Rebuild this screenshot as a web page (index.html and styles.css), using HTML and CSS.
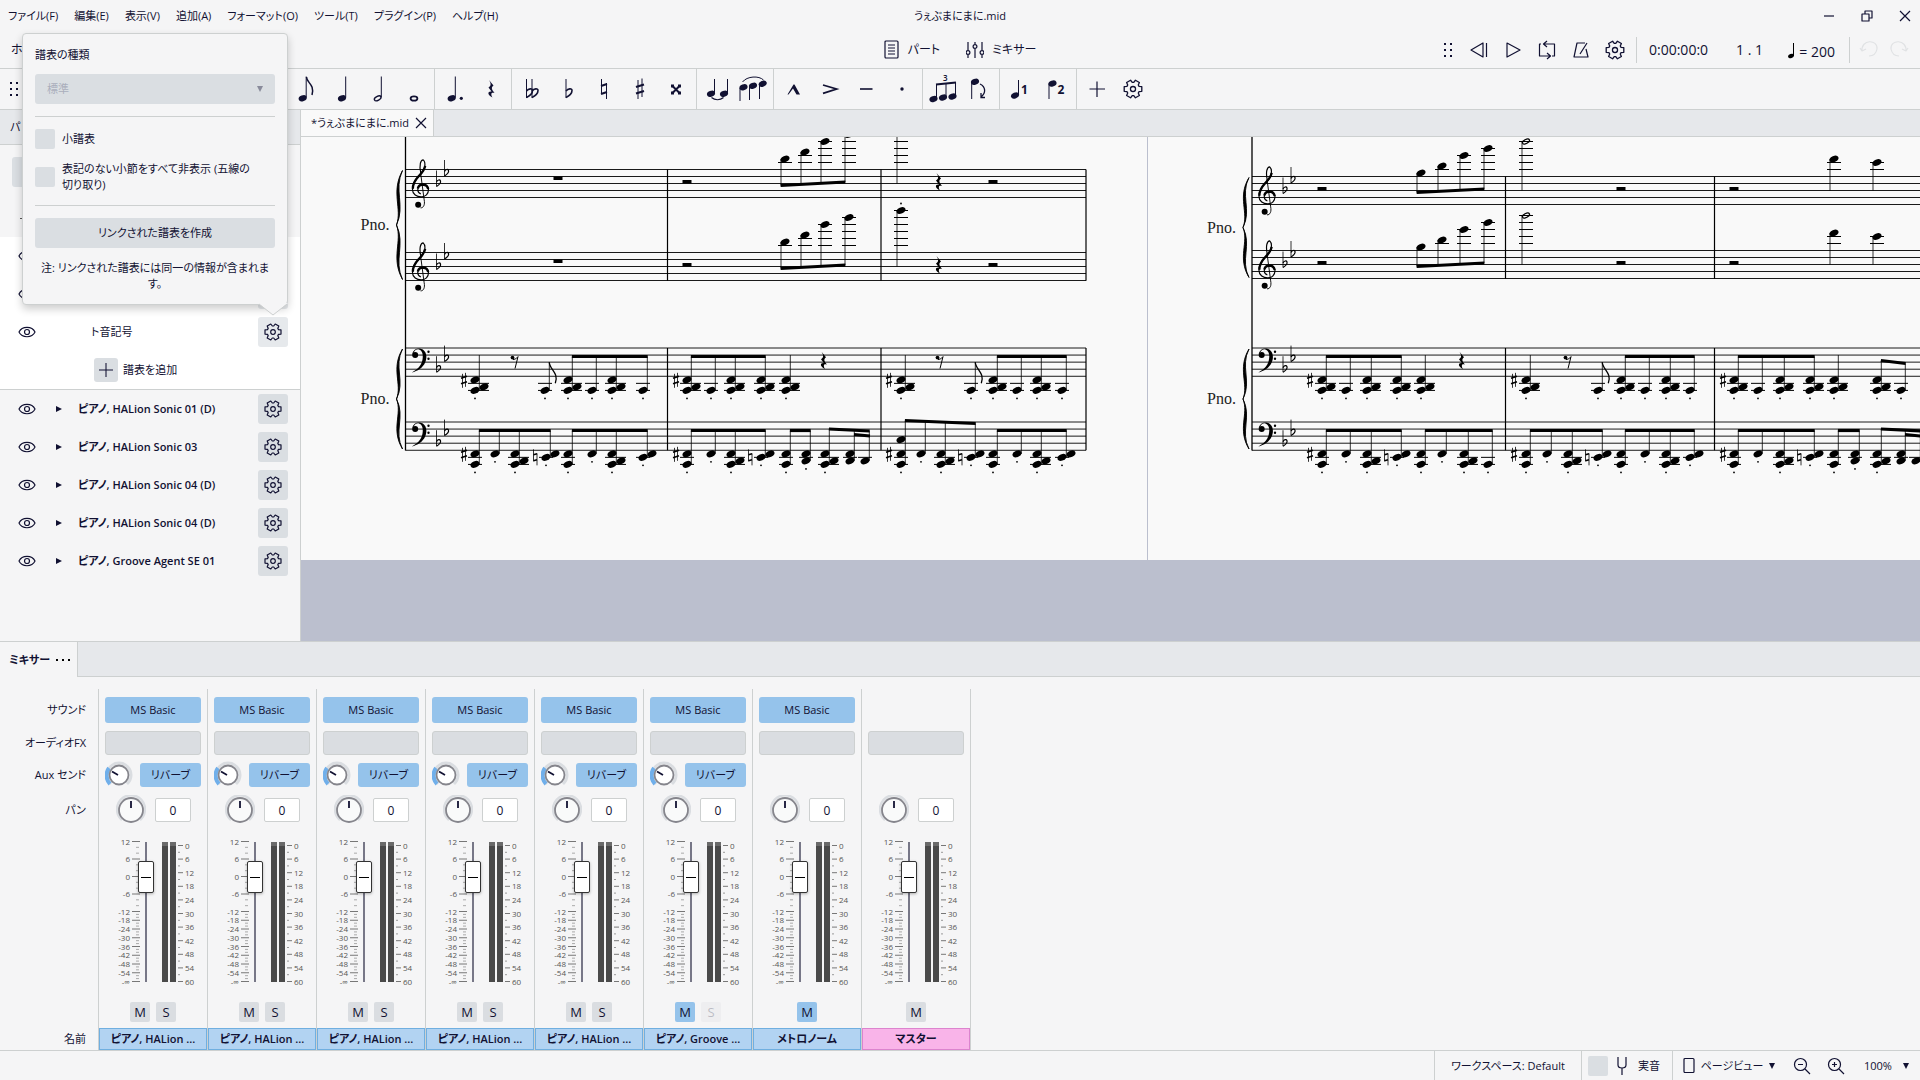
FILE: index.html
```html
<!DOCTYPE html>
<html lang="ja">
<head>
  <meta charset="UTF-8" />
  <title>うぇぶまにまに.mid</title>
  <meta name="viewport" content="width=device-width, initial-scale=1.0">
  <link rel="stylesheet" href="styles.css">
</head>
<body>

<svg class="defs" aria-hidden="true">
  <symbol id="i-gear" viewBox="-10 -10 20 20">
    <path d="M5.5-2.4 8-2.1V2.1L5.5 2.4 4.8 3.6 5.8 5.9 2.2 8 .7 6H-.7L-2.2 8-5.8 5.9-4.8 3.6-5.5 2.4-8 2.1V-2.1L-5.5-2.4-4.8-3.6-5.8-5.9-2.2-8-.7-6H.7L2.2-8 5.8-5.9 4.8-3.6Z"/>
    <circle r="2.3"/>
  </symbol>
  <symbol id="i-eye" viewBox="0 0 18 12">
    <path d="M1 6C4 -.3 14-.3 17 6 14 12.300 4 12.300 1 6Z"/>
    <circle cx="9" cy="6" r="2.500"/>
  </symbol>
  <symbol id="i-plus" viewBox="0 0 16 16"><path d="M8 0V16M0 8H16"/></symbol>
  <symbol id="i-grip" viewBox="0 0 10 14">
    <path class="solid" d="M0 0h2v2H0zM6 0h2v2H6zM0 6h2v2H0zM6 6h2v2H6zM0 12h2v2H0zM6 12h2v2H6z"/>
  </symbol>
  <symbol id="i-down" viewBox="0 0 6 6"><path class="solid" d="M0 0H6L3 6Z"/></symbol>
  <symbol id="i-right" viewBox="0 0 6 6"><path class="solid" d="M0 0 6 3 0 6Z"/></symbol>
  <symbol id="i-close" viewBox="0 0 12 12"><path d="M1 1 11 11M11 1 1 11"/></symbol>
</svg>

<header class="titlebar">
  <nav class="menu">
    <button>ファイル(F)</button>
    <button>編集(E)</button>
    <button>表示(V)</button>
    <button>追加(A)</button>
    <button>フォーマット(O)</button>
    <button>ツール(T)</button>
    <button>プラグイン(P)</button>
    <button>ヘルプ(H)</button>
  </nav>
  <h1>うぇぶまにまに.mid</h1>
  <div class="window-buttons">
    <button aria-label="最小化"><svg class="ico" width="12" height="12" viewBox="0 0 12 12"><path d="M1 6H11"/></svg></button>
    <button aria-label="元に戻す"><svg class="ico" width="12" height="12" viewBox="0 0 12 12"><path d="M1 4H8V11H1ZM4 4V1H11V8H8"/></svg></button>
    <button aria-label="閉じる"><svg class="ico" width="12" height="12"><use href="#i-close"/></svg></button>
  </div>
</header>

<div class="mainbar">
  <nav><button class="home" aria-label="ホーム">ホ</button></nav>
  <div class="mainbar-center">
    <button>
      <svg class="ico" width="16" height="20" viewBox="0 0 16 20"><rect x="1" y="1" width="13" height="17" rx="1"/><path d="M4 5H11M4 8H11M4 11H11M4 14H11"/></svg>
      パート
    </button>
    <button>
      <svg class="ico" width="18" height="18" viewBox="0 0 18 18"><path d="M2 1V9M2 14V17M9 1V3M9 8V17M16 1V9M16 14V17"/><circle cx="2" cy="11.500" r="1.900"/><circle cx="9" cy="5.500" r="1.900"/><circle cx="16" cy="11.500" r="1.900"/></svg>
      ミキサー
    </button>
  </div>
  <div class="playback">
    <svg class="ico grip" width="10" height="14"><use href="#i-grip"/></svg>
    <button class="tool" aria-label="先頭へ"><svg class="ico" width="20" height="18" viewBox="0 0 20 18"><path d="M14 2V16L2 9ZM17.500 2V16"/></svg></button>
    <button class="tool" aria-label="再生"><svg class="ico" width="18" height="18" viewBox="0 0 18 18"><path d="M3 2 16 9 3 16Z"/></svg></button>
    <button class="tool" aria-label="ループ"><svg class="ico" width="18" height="20" viewBox="0 0 18 20"><path d="M5 4H16.500V16H14M13 16H1.500V4H3M9 1 5.500 4 9 7M9 13 12.500 16 9 19"/></svg></button>
    <button class="tool" aria-label="メトロノーム"><svg class="ico" width="18" height="18" viewBox="0 0 18 18"><path d="M13 2H5L2 16H16L14 8M15 2 8 13"/></svg></button>
    <button class="tool" aria-label="再生設定"><svg class="ico" width="22" height="22"><use href="#i-gear"/></svg></button>
    <i class="sep"></i>
    <span class="time">0:00:00:0</span>
    <span class="beat">1 . 1</span>
    <span class="tempo"><svg width="8" height="18" viewBox="0 0 8 18"><ellipse cx="3" cy="15" rx="3" ry="2" transform="rotate(-20 3 15)"/><path d="M5 2h1v13H5z"/></svg> = 200</span>
    <i class="sep"></i>
    <button class="undo" aria-label="元に戻す" disabled><svg class="ico" width="20" height="18" viewBox="0 0 20 18"><path d="M3 11C2-1 19-1 18 9 17 14 14 16 10 16M1 8 3 11 7 9"/></svg></button>
    <button class="undo" aria-label="やり直す" disabled><svg class="ico" width="20" height="18" viewBox="0 0 20 18"><path d="M17 11C18-1 1-1 2 9 3 14 6 16 10 16M19 8 17 11 13 9"/></svg></button>
  </div>
</div>

<div class="notebar">
  <svg class="ico grip" width="10" height="14"><use href="#i-grip"/></svg>
  <div class="notes" id="notebar"></div>
</div>

<main>
  <aside class="instruments">
    <div class="panel-head">パ</div>
    <div class="panel-tools"><button class="btn" aria-label="追加"></button></div>
    <div class="row"><button class="eye closed" aria-label="非表示"></button></div>
    <div class="opened">
      <div class="row">
        <button class="eye" aria-label="表示"><svg class="ico" width="18" height="12"><use href="#i-eye"/></svg></button>
      </div>
      <div class="row">
        <button class="eye" aria-label="表示"><svg class="ico" width="18" height="12"><use href="#i-eye"/></svg></button>
        <button class="btn cog" aria-label="設定"></button>
      </div>
      <div class="row">
        <button class="eye" aria-label="表示"><svg class="ico" width="18" height="12"><use href="#i-eye"/></svg></button>
        <span class="staff-name">ト音記号</span>
        <button class="btn cog" aria-label="設定"><svg class="ico" width="20" height="20"><use href="#i-gear"/></svg></button>
      </div>
      <div class="row add">
        <button class="btn plus" id="add-staff"><svg class="ico" width="14" height="14"><use href="#i-plus"/></svg></button>
        <label for="add-staff">譜表を追加</label>
      </div>
    </div>
    <div id="rows"></div>

    <section class="popup">
      <label class="popup-title" for="staff-type">譜表の種類</label>
      <div class="select">
        <select id="staff-type" disabled><option>標準</option></select>
        <svg width="6" height="6"><use href="#i-down"/></svg>
      </div>
      <hr>
      <div class="check"><input type="checkbox" id="small"><label for="small">小譜表</label></div>
      <div class="check two"><input type="checkbox" id="cutaway"><label for="cutaway">表記のない小節をすべて非表示 (五線の<br>切り取り)</label></div>
      <hr>
      <button class="btn wide">リンクされた譜表を作成</button>
      <p>注: リンクされた譜表には同一の情報が含まれま<br>す。</p>
      <svg class="tip" width="30" height="13" viewBox="0 0 30 13"><path class="fill" d="M0 0H30L15 12Z"/><path class="edge" d="M1 1 15 12 29 1"/></svg>
    </section>
  </aside>

  <section class="score">
    <div class="tabs">
      <div class="tab">*うぇぶまにまに.mid
        <button aria-label="タブを閉じる"><svg class="ico" width="12" height="12"><use href="#i-close"/></svg></button>
      </div>
    </div>
    <div class="canvas">
      <svg class="page" id="page1" width="846" height="423" viewBox="301 137 846 423"></svg>
      <svg class="page" id="page2" width="846" height="423" viewBox="1148 137 846 423"></svg>
    </div>
  </section>
</main>

<section class="mixer">
  <div class="mixer-head">
    <div class="mixer-tab">ミキサー <button aria-label="メニュー"><svg width="16" height="4" viewBox="0 0 16 4"><path d="M1 1h2v2H1zM7 1h2v2H7zM13 1h2v2h-2z"/></svg></button></div>
  </div>
  <div class="mixer-body" id="mixer">
    <div class="labels">
      <span class="r-sound">サウンド</span>
      <span class="r-fx">オーディオFX</span>
      <span class="r-aux">Aux センド</span>
      <span class="r-pan">パン</span>
      <span class="r-name">名前</span>
    </div>
  </div>
</section>

<footer>
  <button class="workspace">ワークスペース: Default</button>
  <div class="pitch">
    <input type="checkbox" id="concert">
    <label for="concert"><svg class="ico" width="10" height="20" viewBox="0 0 10 20"><path d="M1 1V9C1 13 9 13 9 9V1M5 12V19"/></svg>実音</label>
  </div>
  <button class="view"><svg class="ico" width="12" height="18" viewBox="0 0 12 18"><rect x="1" y="1.500" width="10" height="14" rx="1"/></svg><span>ページビュー</span><svg width="6" height="6"><use href="#i-down"/></svg></button>
  <button class="zoom" aria-label="縮小"><svg class="ico" width="18" height="18" viewBox="0 0 18 18"><circle cx="7.500" cy="7.500" r="6"/><path d="M12 12 17 17M5 7.500H10"/></svg></button>
  <button class="zoom" aria-label="拡大"><svg class="ico" width="18" height="18" viewBox="0 0 18 18"><circle cx="7.500" cy="7.500" r="6"/><path d="M12 12 17 17M5 7.500H10M7.500 5V10"/></svg></button>
  <button class="percent">100% <svg width="6" height="6"><use href="#i-down"/></svg></button>
</footer>

<script src="script.js"></script>
</body>
</html>
```
FILE: styles.css
```css
* {
  box-sizing: border-box;
}

html, body {
  margin: 0;
  height: 100%;
}

body {
  display: flex;
  flex-direction: column;
  overflow: hidden;
  background: #f5f5f6;
  color: #111132;
  font-family: 'Open Sans', 'Noto Sans CJK JP', sans-serif;
  font-size: 11px;
  line-height: 16px;
  font-feature-settings: 'palt';
}

button, input, select {
  margin: 0;
  padding: 0;
  border: 0;
  background: none;
  color: inherit;
  font: inherit;
  font-feature-settings: inherit;
}

input[type=checkbox] {
  appearance: none;
  flex: none;
  width: 20px;
  height: 20px;
  border-radius: 2px;
  background: #dadee2;
}

.defs {
  position: absolute;
  width: 0;
  height: 0;
}

.ico {
  flex: none;
  fill: none;
  stroke: currentColor;
  stroke-width: 1.2;
  stroke-linejoin: round;
}

.solid {
  fill: #111132;
  stroke: none;
}

.btn {
  border-radius: 3px;
  background: #dadee2;
}

/* title bar */

.titlebar, .mainbar {
  display: grid;
  grid-template-columns: 1fr auto 1fr;
  align-items: center;
}

.titlebar {
  height: 32px;
}

.menu {
  display: flex;
  gap: 16px;
  padding-left: 8px;
}

.titlebar h1 {
  margin: 0;
  font-size: 11px;
  font-weight: 400;
}

.window-buttons {
  display: flex;
  justify-content: flex-end;
  gap: 8px;
}

.window-buttons button {
  display: flex;
  justify-content: center;
  width: 30px;
}

/* main toolbar */

.mainbar {
  height: 37px;
  border-bottom: 1px solid #cdd0d0;
  font-size: 12px;
}

.home {
  padding-left: 11px;
}

.mainbar-center {
  display: flex;
  gap: 26px;
}

.mainbar-center button {
  display: flex;
  align-items: center;
  gap: 8px;
}

.playback {
  display: flex;
  justify-content: flex-end;
  align-items: center;
  padding-right: 6px;
  font-size: 14px;
}

.playback .grip {
  margin-right: 8px;
}

.tool {
  display: flex;
  align-items: center;
  justify-content: center;
  width: 34px;
  height: 30px;
}

.sep {
  width: 1px;
  height: 26px;
  margin: 0 4px;
  background: #cdd0d0;
}

.time {
  width: 66px;
  padding-left: 8px;
}

.beat {
  width: 56px;
  text-align: right;
}

.tempo {
  width: 72px;
  margin-right: 10px;
  text-align: right;
  white-space: nowrap;
}

.tempo svg {
  vertical-align: -2px;
}

.undo {
  width: 30px;
  height: 20px;
  color: #e0e2e4;
}

.notebar {
  display: flex;
  align-items: center;
  height: 41px;
  border-bottom: 1px solid #cdd0d0;
}

.notebar .grip {
  margin-left: 10px;
}

.notes {
  display: flex;
  margin-left: 268px;
}

.notes button {
  width: 36px;
  height: 40px;
}

.notes button > svg {
  display: block;
  fill: #111132;
}

.notes .ln {
  fill: none;
  stroke: #111132;
}

.notes text {
  font-size: 12px;
  font-weight: 700;
}

.notes text.tiny {
  font-size: 8px;
  font-weight: 600;
}

.notes i {
  width: 1px;
  margin: 0 2px;
  background: #cdd0d0;
}

/* instruments */

main {
  display: flex;
  flex: 1;
  min-height: 0;
}

.instruments {
  position: relative;
  flex: none;
  width: 301px;
  border-right: 1px solid #cdd0d0;
}

.panel-head {
  height: 35px;
  padding: 9px 10px;
  border-bottom: 1px solid #cdd0d0;
  background: #e6e8eb;
}

.panel-tools {
  height: 54px;
  padding: 12px;
}

.panel-tools .btn {
  width: 60px;
  height: 30px;
}

.row {
  display: flex;
  align-items: center;
  height: 38px;
  padding: 0 12px 0 18px;
}

.opened {
  border-bottom: 1px solid #cdd0d0;
  background: #fff;
}

.eye {
  display: flex;
  width: 18px;
}

.eye.closed {
  width: 16px;
  height: 1px;
  margin-left: 2px;
  background: #555;
}

.arrow {
  display: flex;
  width: 28px;
  padding-left: 20px;
}

.name {
  margin-left: 14px;
  font-weight: 600;
}

.staff-name {
  margin-left: 55px;
}

.cog {
  display: flex;
  align-items: center;
  justify-content: center;
  width: 30px;
  height: 30px;
  margin-left: auto;
}

.opened .cog {
  background: #e6e9ec;
}

.row.add {
  gap: 5px;
  padding-left: 94px;
}

.plus {
  display: flex;
  align-items: center;
  justify-content: center;
  width: 24px;
  height: 24px;
}

.popup {
  position: absolute;
  left: 22px;
  top: -77px;
  z-index: 2;
  width: 266px;
  padding: 13px 12px 12px;
  border: 1px solid #cdd0d0;
  border-radius: 4px;
  background: #f5f5f6;
  box-shadow: 0 4px 8px rgba(0, 0, 0, 0.2);
}

.popup-title {
  display: block;
  margin-bottom: 11px;
}

.select {
  display: flex;
  align-items: center;
  height: 30px;
  padding: 0 12px;
  border-radius: 3px;
  background: #dadee2;
}

.select select {
  appearance: none;
  flex: 1;
  opacity: 1;
  color: #aaaebc;
}

.select svg {
  opacity: 0.4;
}

.popup hr {
  margin: 12px 0;
  border: 0;
  border-top: 1px solid #cdd0d0;
}

.check {
  display: flex;
  align-items: center;
  gap: 7px;
}

.check.two {
  margin-top: 12px;
}

.wide {
  display: block;
  width: 100%;
  height: 30px;
}

.popup p {
  margin: 12px 0 0;
  text-align: center;
  white-space: nowrap;
}

.tip {
  position: absolute;
  right: -1px;
  bottom: -12px;
}

.tip .fill {
  fill: #f5f5f6;
}

.tip .edge {
  fill: none;
  stroke: #cdd0d0;
}

/* score */

.score {
  display: flex;
  flex-direction: column;
  flex: 1;
  min-width: 0;
}

.tabs {
  display: flex;
  height: 27px;
  border-bottom: 1px solid #cdd0d0;
  background: #e6e8eb;
}

.tab {
  display: flex;
  align-items: center;
  gap: 6px;
  padding: 0 6px 0 10px;
  border-right: 1px solid #cdd0d0;
  background: #f9f9f9;
}

.tab button {
  display: flex;
}

.canvas {
  display: flex;
  flex: 1;
  align-items: flex-start;
  gap: 1px;
  overflow: hidden;
  background: #bbbfce;
}

.page {
  flex: none;
  background: #f9f9f9;
}

.page .line {
  fill: none;
  stroke: #000;
}

.page text {
  fill: #222;
  font-family: 'Liberation Serif', serif;
  font-size: 16px;
}

/* mixer */

.mixer-head {
  display: flex;
  height: 36px;
  border-top: 1px solid #cdd0d0;
  border-bottom: 1px solid #cdd0d0;
  background: #e6e8eb;
}

.mixer-tab {
  display: flex;
  align-items: center;
  gap: 5px;
  height: 35px;
  padding: 0 6px 0 9px;
  border-right: 1px solid #cdd0d0;
  background: #f5f5f6;
  font-weight: 600;
}

.mixer-tab button {
  display: flex;
}

.mixer-body {
  display: flex;
  padding-top: 12px;
  border-bottom: 1px solid #cdd0d0;
}

.labels, .strip {
  display: grid;
  grid-template-rows: 26px 24px 24px 30px 159px 20px 22px;
  row-gap: 8px;
  padding-top: 8px;
}

.labels {
  width: 98px;
  padding-right: 12px;
  align-items: center;
  text-align: right;
}

.r-sound { grid-row: 1; }
.r-fx { grid-row: 2; }
.r-aux { grid-row: 3; }
.r-pan { grid-row: 4; }
.r-fader { grid-row: 5; }
.r-ms { grid-row: 6; }
.r-name { grid-row: 7; }

.strip {
  width: 109px;
  padding-left: 1px;
  border-left: 1px solid #cdd0d0;
  grid-template-columns: 106px;
}

.end {
  border-left: 1px solid #cdd0d0;
}

.strip .r-sound, .strip .r-fx, .strip .r-aux {
  width: 96px;
  margin-left: 5px;
}

.blue {
  border-radius: 3px;
  background: #95c3eb;
}

.strip .r-fx {
  border: 1px solid #cdd0d0;
  border-radius: 3px;
  background: #dadde1;
}

.strip .r-aux {
  display: flex;
  align-items: center;
  justify-content: space-between;
}

.r-aux .blue {
  width: 61px;
  height: 24px;
}

.strip .r-pan {
  display: flex;
  align-items: center;
  gap: 9px;
  padding-left: 16px;
}

.r-pan input {
  width: 36px;
  height: 24px;
  border: 1px solid #cdd0d0;
  border-radius: 2px;
  background: #fff;
  font-size: 12px;
  text-align: center;
}

.fader {
  position: relative;
  margin: 4px 0 0 5px;
}

.fader text {
  fill: #555;
  font-size: 8px;
}

.fader input {
  position: absolute;
  left: 33px;
  top: 5px;
  width: 16px;
  height: 140px;
  appearance: none;
  writing-mode: vertical-lr;
  direction: rtl;
  background: linear-gradient(#777787, #777787) center / 2px 100% no-repeat;
}

.fader input::-webkit-slider-thumb {
  appearance: none;
  width: 16px;
  height: 32px;
  border: 1px solid #333;
  border-radius: 2px;
  background: linear-gradient(#000, #000) center / 10px 1px no-repeat #fff;
  box-shadow: 0 1px 3px rgba(0, 0, 0, 0.3);
}

.strip .r-ms {
  display: flex;
  justify-content: center;
  gap: 6px;
  margin-top: 2px;
}

.r-ms button {
  width: 20px;
  height: 20px;
  border-radius: 2px;
  background: #dadde1;
  font-size: 13px;
}

.r-ms button.on {
  background: #95c3eb;
}

.r-ms button:disabled {
  opacity: 0.25;
}

.strip .r-name {
  width: 108px;
  margin-left: -1px;
  border: 1px solid #70afe0;
  background: #b2d3f2;
  font-weight: 600;
  line-height: 20px;
  text-align: center;
}

.strip .r-name.master {
  border-color: #dc84ce;
  background: #f9b4e9;
}

/* status bar */

footer {
  display: flex;
  justify-content: flex-end;
  height: 29px;
}

footer button, footer div, footer label {
  display: flex;
  align-items: center;
}

.workspace {
  justify-content: center;
  width: 147px;
  border-left: 1px solid #cdd0d0;
}

.pitch {
  gap: 9px;
  width: 92px;
  padding-left: 6px;
  border: solid #cdd0d0;
  border-width: 0 1px;
}

.pitch label {
  gap: 11px;
}

.view {
  justify-content: center;
  gap: 6px;
  width: 112px;
}

.zoom {
  justify-content: center;
  width: 34px;
}

.percent {
  gap: 11px;
  width: 67px;
  padding-left: 11px;
}
```
FILE: script.js
```js
/* ---------- note input toolbar ---------- */

const head = (x, y) => `<ellipse cx="${x}" cy="${y}" rx="4.2" ry="2.9" transform="rotate(-22 ${x} ${y})"/>`;
const open = (x, y) => `<ellipse class="ln" cx="${x}" cy="${y}" rx="3.6" ry="2" stroke-width="1.4" transform="rotate(-28 ${x} ${y})"/>`;
const ln = (d, w = 1) => `<path class="ln" d="${d}" stroke-width="${w}"/>`;
const flat = x => ln(`M${x} 10V29`) + ln(`M${x} 28.500C${x + 3} 27 ${x + 6} 24 ${x + 6} 21.500 ${x + 6} 19 ${x + 2} 19.500 ${x} 22`, 1.6);
const rest = 'M16 11L20.500 16.500C18 18.500 18.500 20 21.500 24 19 23 17 24 19.500 28.500 14 26 14.500 22 18.500 22.500L15.500 18.500C18.500 16.500 18 14.500 16 11Z';

const tools = [
  ['8分音符', head(14.7, 29.3) + ln('M18.200 7.500V28.500') + ln('M18.500 8C18.500 14 27 15 24 26', 1.5)],
  ['4分音符', head(18, 29.3) + ln('M21.700 7.500V28.500')],
  ['2分音符', open(17.7, 29.3) + ln('M21.300 7.500V28')],
  ['全音符', '<ellipse class="ln" cx="18" cy="29.500" rx="3.400" ry="2.200" stroke-width="1.800"/>'],
  null,
  ['付点', head(14.7, 29.3) + ln('M18.300 7.500V28.500') + '<circle cx="24.300" cy="29.300" r="1.600"/>'],
  ['休符', `<path d="${rest}"/>`],
  null,
  ['ダブルフラット', flat(12.500) + flat(18)],
  ['フラット', flat(16)],
  ['ナチュラル', ln('M15.500 10V25M20.500 14V30') + ln('M15 17L21 15M15 25L21 23', 2)],
  ['シャープ', ln('M16 11V30M20 9.500V28') + ln('M14 18L22 15.500M14 24.500L22 22', 2.2)],
  ['ダブルシャープ', ln('M14.500 17L21.500 24M21.500 17L14.500 24', 2) + '<path d="M13 15.500h3v3h-3zM20 15.500h3v3h-3zM13 22.500h3v3h-3zM20 22.500h3v3h-3z"/>'],
  null,
  ['タイ', head(12, 24.7) + head(25, 24.7) + ln('M15.500 10V24M28.500 10V24') + ln('M12.500 28.500C16 31.500 21 31.500 24.500 28.500', 1.2)],
  ['スラー', head(8.5, 18.3) + head(18, 16.7) + head(27.7, 14.7) + ln('M5 19V32M14.500 17V31M24.500 15V30') + ln('M7.500 13C12 7 24 6.500 28.500 11')],
  null,
  ['マルカート', '<path d="M11.500 25.500L17.500 15.500H18.500L24 25.500H20.500L17 19.500 12.500 25.500Z"/>'],
  ['アクセント', ln('M11 16L24.500 20 11 24.300', 1.8)],
  ['テヌート', ln('M12 20H24.500', 1.6)],
  ['スタッカート', '<circle cx="18" cy="20" r="1.700"/>'],
  null,
  ['連符', '<text class="tiny" x="18" y="12">3</text>' + ln('M11.500 29V15M21 28V14.500M30.500 27V13.500') + ln('M11 15.500L31 13.500', 2) + head(8.500, 30) + head(18, 28.500) + head(27.500, 27.500)],
  ['反転', head(14, 12.700) + ln('M10.700 13V30') + ln('M19 15C25 18 25 24 20 28M20 24V28.500H24', 1.3)],
  null,
  ['声部1', head(13, 26.500) + ln('M16.500 11V26') + '<text x="19" y="25">1</text>'],
  ['声部2', head(14.500, 14.500) + ln('M11 14.500V30') + '<text x="19.500" y="25">2</text>'],
  null,
  ['追加', ln('M18 12.500V28M10.500 20H26', 1.2)],
  ['設定', '<svg class="ico" x="7" y="9" width="22" height="22"><use href="#i-gear"/></svg>']
];

document.getElementById('notebar').innerHTML = tools.map(t => t
  ? `<button aria-label="${t[0]}"><svg width="36" height="40">${t[1]}</svg></button>`
  : '<i></i>').join('');

/* ---------- instrument list ---------- */

const instruments = [
  'ピアノ, HALion Sonic 01 (D)',
  'ピアノ, HALion Sonic 03',
  'ピアノ, HALion Sonic 04 (D)',
  'ピアノ, HALion Sonic 04 (D)',
  'ピアノ, Groove Agent SE 01'
];

document.getElementById('rows').innerHTML = instruments.map(name => `
  <div class="row">
    <button class="eye" aria-label="表示"><svg class="ico" width="18" height="12"><use href="#i-eye"/></svg></button>
    <button class="arrow" aria-label="開く"><svg width="6" height="6"><use href="#i-right"/></svg></button>
    <span class="name">${name}</span>
    <button class="btn cog" aria-label="設定"><svg class="ico" width="20" height="20"><use href="#i-gear"/></svg></button>
  </div>`).join('');

/* ---------- score ---------- */

const line = (d, w = 1) => `<path class="line" d="${d}" stroke-width="${w}"/>`;

function makeStaff(x1, x2, top, gap) {
  const y = p => top + p * gap / 2;
  let out = '';
  for (let i = 0; i < 5; i++) out += line(`M${x1} ${y(i * 2)}H${x2}`, 0.9);

  const ledgers = (x, ps, wide) => {
    const low = Math.max(...ps), high = Math.min(...ps);
    for (let p = 10; p <= low; p += 2) out += line(`M${x - 7} ${y(p)}H${x + (wide ? 14 : 7)}`);
    for (let p = -2; p >= high; p -= 2) out += line(`M${x - 7} ${y(p)}H${x + 7}`);
  };

  const blob = (x, cy) => `<ellipse cx="${x}" cy="${cy}" rx="4.700" ry="3.100" transform="rotate(-24 ${x} ${cy})"/>`;
  const heads = (x, ps, side) => {
    ledgers(x, side ? ps.concat(side) : ps, side === 11);
    ps.forEach(p => out += blob(x, y(p)));
    if (side) out += blob(x + 9, y(side));
  };

  return {
    y,
    get svg() { return out; },
    add(s) { out += s; },
    clef(kind) {
      const oy = kind === 'g' ? y(6) : y(2);
      out += `<g transform="translate(${x1} ${oy}) scale(.3333)">` + (kind === 'g'
        ? line('M46-52C40-78 46-92 53-92 62-84 60-62 42-45 28-32 21-18 21-2 21 12 34 19 47 19 60 19 69 10 69-2 69-12 61-18 52-18 42-18 36-11 37-2 37 5 41 9 46 10', 3.500)
          + line('M59-74C57-60 46-50 38-41 28-30 22-18 22-5M37-6C39-15 46-18 53-18 62-17 67-11 68-4', 7)
          + line('M45-55L56 28C59 42 54 53 45 52', 2.800) + '<circle cx="38" cy="43" r="9"/>'
        : '<circle cx="29" cy="0" r="9"/><path d="M20-4C24-18 36-22 46-19 64-14 66 8 59 22 52 38 36 48 19 52 36 43 46 33 50 18 54 2 52-14 40-17 32-18 27-13 24-6Z"/><circle cx="69" cy="-10" r="3.500"/><circle cx="69" cy="11" r="3.500"/>')
        + '</g>';
      const b = kind === 'g' ? 4 : 6;
      [[31, b], [39, b - 3]].forEach(([dx, p]) => {
        const x = x1 + dx, cy = y(p);
        out += line(`M${x} ${cy - 13}V${cy + 3}`, 0.8)
          + line(`M${x} ${cy + 3}C${x + 3} ${cy + 1} ${x + 4.500} ${cy - 1} ${x + 4} ${cy - 2.500}S${x + 1} ${cy - 4} ${x} ${cy - 1.500}`, 1.200);
      });
    },
    halfRest(x, hang) {
      out += `<rect x="${x - 4.500}" y="${hang ? y(2) : y(4) - 3.500}" width="9" height="3.500"/>`;
    },
    quarterRest(x) {
      out += `<path transform="translate(${x - 18.500} ${y(4) - 21.500})" d="${rest}"/>`;
    },
    eighthRest(x) {
      const cy = y(3);
      out += `<circle cx="${x - 2.500}" cy="${cy - 1}" r="1.900"/>` + line(`M${x - 2} ${cy + 1}Q${x + 1} ${cy + 1} ${x + 3} ${cy - 2}L${x} ${cy + 10}`);
    },
    sharp(x) {
      const cy = y(9);
      out += line(`M${x - 1.500} ${cy - 6}V${cy + 8}M${x + 1.500} ${cy - 7}V${cy + 7}`, 0.8)
        + line(`M${x - 3} ${cy - 1.500}L${x + 3} ${cy - 3.500}M${x - 3} ${cy + 4}L${x + 3} ${cy + 2}`, 1.600);
    },
    natural(x) {
      const cy = y(10);
      out += line(`M${x - 1.500} ${cy - 8}V${cy + 4}M${x + 2} ${cy - 4}V${cy + 8}`, 0.8)
        + line(`M${x - 1.500} ${cy - 2.500}L${x + 2} ${cy - 3.500}M${x - 1.500} ${cy + 3.500}L${x + 2} ${cy + 2.500}`, 1.600);
    },
    // chords hanging under the staff, stems up to a beam; c is a key of CHORDS
    up(list, y1, y2 = y1, beam = true) {
      const first = list[0][0] + 4.300, last = list[list.length - 1][0] + 4.300;
      list.forEach(([x, c]) => {
        const [ps, side] = CHORDS[c];
        heads(x, ps, side);
        const sx = x + 4.300, t = last > first ? (sx - first) / (last - first) : 0;
        out += line(`M${sx} ${y(Math.max(...ps))}V${y1 + (y2 - y1) * t}`, 0.8);
        if (!'lz'.includes(c)) out += `<circle cx="${x}" cy="${y(Math.max(...ps, side || 0)) + 8}" r=".9"/>`;
      });
      if (beam) out += line(`M${first - 0.400} ${y1}L${last + 0.400} ${y2}`, 3.200);
    },
    // notes above the staff, stems down
    down(list, y1, y2 = y1, beam = true) {
      const first = list[0][0] - 4, last = list[list.length - 1][0] - 4;
      list.forEach(([x, p, hollow]) => {
        ledgers(x, [p]);
        out += hollow
          ? `<ellipse class="line" cx="${x}" cy="${y(p)}" rx="3.800" ry="2" stroke-width="1.300" transform="rotate(-28 ${x} ${y(p)})"/>`
          : blob(x, y(p));
        const sx = x - 4, t = last > first ? (sx - first) / (last - first) : 0;
        out += line(`M${sx} ${y(p)}V${y1 + (y2 - y1) * t}`, 0.8);
      });
      if (beam) out += line(`M${first - 0.400} ${y1}L${last + 0.400} ${y2}`, 3.200);
    },
    flagged(x) {
      this.up([[x, 'c']], y(4), y(4), false);
      const sx = x + 4.300;
      out += line(`M${sx} ${y(4)}C${sx} ${y(6)} ${sx + 10} ${y(7)} ${sx + 6} ${y(10)}`, 1.300);
    }
  };
}

// [heads on the stem, head on the other side]
const CHORDS = {
  a: [[9, 12], 11],
  b: [[9, 12]],
  c: [[12]],
  f: [[9]],
  n: [[10], 9],
  h: [[9, 11]],
  l: [[9, 11]],
  z: [[11]],
  t: [[5, 9, 12]]
};

function brace(x, y1, y2) {
  const m = (y1 + y2) / 2, h = (y2 - y1) / 4;
  return `<path d="M${x + 6} ${y1}C${x - 3} ${y1 + h * 0.700} ${x + 9} ${m - h * 0.700} ${x} ${m}C${x + 9} ${m + h * 0.700} ${x - 3} ${y2 - h * 0.700} ${x + 6} ${y2}C${x - 6} ${y2 - h * 0.800} ${x + 6} ${m + h * 0.600} ${x} ${m}C${x + 6} ${m - h * 0.600} ${x - 6} ${y1 + h * 0.800} ${x + 6} ${y1}Z" stroke="#000" stroke-width=".9"/>`;
}

function system(x1, x2, tops, bars, labels) {
  const staves = tops.map((t, i) => {
    const s = makeStaff(x1, x2, t, i < 2 ? 7 : 7.070);
    s.clef(i < 2 ? 'g' : 'f');
    return s;
  });
  let frame = line(`M${x1} 130V${tops[3] + 28.500}`, 1.300);
  [[0, 1], [2, 3]].forEach(([a, b], i) => {
    frame += brace(x1 - 9, tops[a] + 1, tops[b] + 27);
    bars.forEach(x => frame += line(`M${x} ${tops[a]}V${tops[b] + 28.300}`, 1.200));
    frame += `<text x="${x1 - 45}" y="${labels[i]}">Pno.</text>`;
  });
  return { staves, frame };
}

function draw(id, sys) {
  document.getElementById(id).innerHTML = sys.frame + sys.staves.map(s => s.svg).join('');
}

// first page
const one = system(405.500, 1086, [169.500, 252.500, 348, 422], [667.500, 881, 1086], [230, 404]);
one.staves.slice(0, 2).forEach(s => {
  s.halfRest(558, true);
  s.halfRest(687);
  s.down([[785, -3], [805, -5], [825, -8], [849, -10]], s.y(4) + 2, s.y(4) - 1.500);
  s.down([[901, -12]], s.y(4), s.y(4), false);
  s.add(`<circle cx="901" cy="${s.y(-12) - 7}" r=".9"/>`);
  s.quarterRest(939);
  s.halfRest(993);
});
let s = one.staves[2];
s.sharp(464); s.up([[475, 'a']], 355, 355, false); s.eighthRest(515); s.flagged(545);
s.up([[568, 'a'], [592, 'c'], [612, 'a'], [643, 'c']], 356.500);
s.sharp(676); s.up([[687, 'a'], [711, 'c'], [731, 'a'], [761, 'a']], 356.500);
s.up([[786, 'a']], 355, 355, false); s.quarterRest(824);
s.sharp(889); s.up([[901, 'a']], 355, 355, false); s.eighthRest(940); s.flagged(971);
s.up([[993, 'a'], [1017, 'c'], [1037, 'a'], [1062, 'c']], 356.500);
s = one.staves[3];
s.sharp(464); s.natural(535); s.up([[475, 'b'], [495, 'f'], [515, 'a'], [546, 'n']], 430.500);
s.up([[568, 'b'], [592, 'f'], [612, 'a'], [643, 'n']], 430.500);
s.sharp(676); s.natural(750); s.up([[687, 'b'], [711, 'f'], [731, 'a'], [761, 'n']], 430.500);
s.up([[786, 'b'], [806, 'h']], 430.500);
s.up([[825, 'a'], [850, 'l'], [865, 'z']], 429, 431); s.add(line('M854 434.500L870 436', 3));
s.sharp(889); s.natural(960); s.up([[901, 't'], [921, 'f'], [941, 'a'], [971, 'n']], 420.500, 423.500);
s.up([[993, 'b'], [1017, 'f'], [1037, 'a'], [1062, 'n']], 430.500);
draw('page1', one);

// second page
const two = system(1252, 2000, [176.500, 250.500, 348, 422], [1505.500, 1714.500], [233, 404]);
two.staves.slice(0, 2).forEach(s => {
  s.halfRest(1322);
  s.down([[1421, -1], [1442, -3], [1464, -6], [1488, -8]], s.y(4) + 2, s.y(4) - 1.500);
  s.down([[1526, -10, true]], s.y(4), s.y(4), false);
  s.halfRest(1621);
  s.halfRest(1734);
  s.down([[1834, -5]], s.y(4), s.y(4), false);
  s.down([[1877, -4]], s.y(4), s.y(4), false);
});
s = two.staves[2];
s.sharp(1310); s.up([[1322, 'a'], [1346, 'c'], [1367, 'a'], [1397, 'a']], 356.500);
s.up([[1421, 'a']], 355, 355, false); s.quarterRest(1462);
s.sharp(1514); s.up([[1526, 'a']], 355, 355, false); s.eighthRest(1568); s.flagged(1598);
s.up([[1621, 'a'], [1645, 'c'], [1666, 'a'], [1690, 'c']], 356.500);
s.sharp(1723); s.up([[1734, 'a'], [1758, 'c'], [1780, 'a'], [1810, 'a']], 356.500);
s.up([[1834, 'a']], 355, 355, false); s.up([[1877, 'a'], [1901, 'c']], 360.500, 363.500);
s = two.staves[3];
s.sharp(1310); s.natural(1386); s.up([[1322, 'b'], [1346, 'f'], [1367, 'a'], [1397, 'n']], 430.500);
s.up([[1421, 'b'], [1442, 'f'], [1464, 'a'], [1488, 'c']], 430.500);
s.sharp(1514); s.natural(1587); s.up([[1526, 'b'], [1547, 'f'], [1568, 'a'], [1598, 'n']], 430.500);
s.up([[1621, 'b'], [1645, 'f'], [1666, 'a'], [1690, 'n']], 430.500);
s.sharp(1723); s.natural(1799); s.up([[1734, 'b'], [1758, 'f'], [1780, 'a'], [1810, 'n']], 430.500);
s.up([[1834, 'b'], [1855, 'h']], 430.500);
s.up([[1877, 'a'], [1901, 'l'], [1916, 'z']], 429, 431); s.add(line('M1905 434.500L1921 436', 3));
draw('page2', two);

/* ---------- mixer ---------- */

function scaleSvg() {
  let out = '';
  const tick = (x1, x2, y, c) => out += `<path d="M${x1} ${y}H${x2}" stroke="${c}"/>`;
  const label = (x, y, t, a) => out += `<text x="${x}" y="${y + 3}" text-anchor="${a}">${t}</text>`;
  ['12', '6', '0', '-6', '-12', '-18', '-24', '-30', '-36', '-42', '-48', '-54', '-∞'].forEach((t, i) => {
    const y = i < 5 ? 4.500 + i * 17.500 : 74.500 + (i - 4) * 8.750;
    const step = i < 4 ? 5.830 : 2.920;
    tick(27, 35, y, '#777');
    label(25, y, t, 'end');
    if (i < 12) [1, 2].forEach(n => tick(31, 34, y + step * n, '#aaa'));
  });
  out += '<path d="M57 5h6v140h-6zM65 5h6v140h-6z" fill="#4a4a4a"/><path d="M57 5h6v4h-6zM65 5h6v4h-6z" fill="#6a6a6a"/>';
  for (let i = 0; i <= 10; i++) {
    const y = 8.500 + i * 13.600;
    tick(73, 78, y, '#777');
    label(80, y, i * 6, 'start');
    if (i < 10) tick(73, 75, y + 6.800, '#999');
  }
  return `<svg width="96" height="148">${out}</svg>`;
}

const auxKnob = `<svg width="28" height="28" viewBox="-14 -14 28 28">
  <path d="M-8 9A12 12 0 1 1 8 9" fill="none" stroke="#dadde1" stroke-width="3"/>
  <path d="M-9 9A12.500 12.500 0 0 1-10-7" fill="none" stroke="#70afea" stroke-width="4"/>
  <circle r="9.500" fill="#fff" stroke="#85858c" stroke-width="1.800"/><path d="M-7-3.500L-1 0" stroke="#111132" stroke-width="1.800"/></svg>`;
const panKnob = `<svg width="30" height="30" viewBox="-15 -15 30 30">
  <path d="M-9 10A14 14 0 1 1 9 10" fill="none" stroke="#dadde1" stroke-width="2.500"/>
  <circle r="12" fill="#f9fafa" stroke="#85858c" stroke-width="1.800"/><path d="M0-9V-2" stroke="#111132" stroke-width="1.800"/></svg>`;

const channels = [
  { name: 'ピアノ, HALion ...' },
  { name: 'ピアノ, HALion ...' },
  { name: 'ピアノ, HALion ...' },
  { name: 'ピアノ, HALion ...' },
  { name: 'ピアノ, HALion ...' },
  { name: 'ピアノ, Groove ...', muted: true },
  { name: 'メトロノーム', muted: true, noAux: true, noSolo: true },
  { name: 'マスター', master: true, noAux: true, noSolo: true }
];

document.getElementById('mixer').innerHTML += channels.map(c => `
  <div class="strip">
    ${c.master ? '' : '<button class="blue r-sound">MS Basic</button>'}
    <button class="r-fx" aria-label="オーディオFX"></button>
    ${c.noAux ? '' : `<div class="r-aux">${auxKnob}<button class="blue">リバーブ</button></div>`}
    <div class="r-pan">${panKnob}<input type="text" value="0" aria-label="パン"></div>
    <div class="fader r-fader">${scaleSvg()}<input type="range" min="0" max="100" value="82" aria-label="音量"></div>
    <div class="r-ms">
      <button class="${c.muted ? 'on' : ''}">M</button>
      ${c.noSolo ? '' : `<button ${c.muted ? 'disabled' : ''}>S</button>`}
    </div>
    <div class="r-name ${c.master ? 'master' : ''}">${c.name}</div>
  </div>`).join('') + '<div class="end"></div>';
```
